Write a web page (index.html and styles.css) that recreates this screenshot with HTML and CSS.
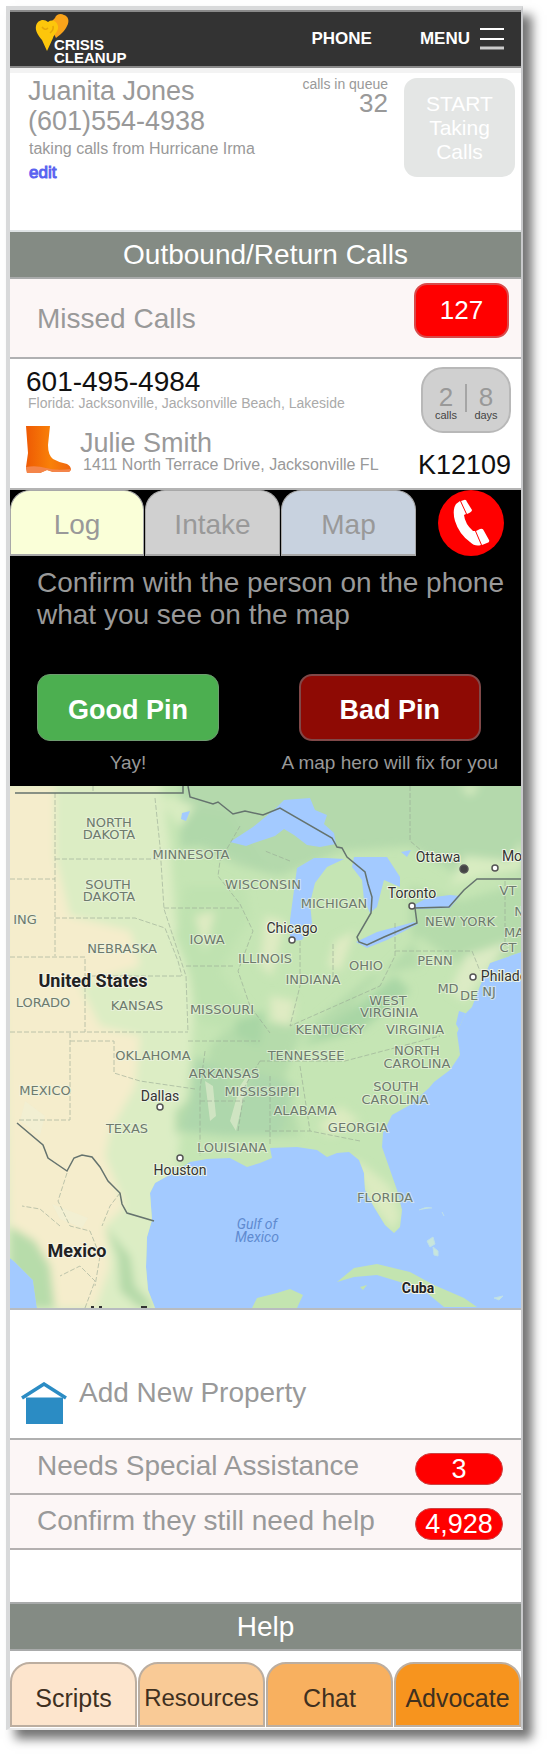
FILE: index.html
```html
<!DOCTYPE html>
<html lang="en">
<head>
<meta charset="utf-8">
<meta name="viewport" content="width=device-width, initial-scale=1">
<title>Crisis Cleanup Phone</title>
<link rel="stylesheet" href="styles.css">
</head>
<body>
<div class="panel">
  <header class="topbar">
    <a class="logo" href="#" aria-label="Crisis Cleanup">
      <svg width="96" height="54" viewBox="0 0 96 54">
        <path d="M20 6C21 2 26 1 29 3C33 4 35 9 32 14C30 19 25 23 21 26L14 12Z" fill="#f9a31a"/>
        <path d="M1 14C2 8 9 6 13 10C17 7 22 9 23 14C24 19 19 22 18 26L12 39L7 28C3 23 0 19 1 14Z" fill="#fdc60b"/>
        <path d="M7 15q3 4 6 1m2 5q4-3 3-7" fill="none" stroke="#e5a50a" stroke-width="1.5"/>
        <text class="logo-text" x="19" y="38">CRISIS</text>
        <text class="logo-text" x="19" y="51">CLEANUP</text>
      </svg>
    </a>
    <a class="phone-link" href="#">PHONE</a>
    <button class="menu" type="button">MENU
      <svg width="24" height="22" viewBox="0 0 24 22"><path d="M0 1h24M0 11h24" stroke="#fff" stroke-width="2"/><path d="M0 20h24" stroke="#ccc" stroke-width="3"/></svg>
    </button>
  </header>

  <section class="profile">
    <div class="agent">
      <div class="line">Juanita Jones</div>
      <div class="line">(601)554-4938</div>
      <div class="campaign">taking calls from Hurricane Irma</div>
      <a class="edit" href="#">edit</a>
    </div>
    <div class="queue">
      <div class="queue-label">calls in queue</div>
      <div class="queue-count">32</div>
    </div>
    <button class="start" type="button">START<br>Taking<br>Calls</button>
  </section>

  <h2 class="bar">Outbound/Return Calls</h2>

  <section class="missed">
    <span>Missed Calls</span>
    <span class="missed-count">127</span>
  </section>

  <section class="contact">
    <div class="contact-main">
      <div class="number">601-495-4984</div>
      <div class="region">Florida: Jacksonville, Jacksonville Beach, Lakeside</div>
      <div class="person">
        <svg width="46" height="48" viewBox="0 0 46 48">
          <defs><linearGradient id="boot"><stop offset="0" stop-color="#ee5a04"/><stop offset=".55" stop-color="#f98108"/><stop offset="1" stop-color="#ef6510"/></linearGradient></defs>
          <path d="M1 1H25L23 20Q23 30 28 34Q35 38 42 39Q46 41 46 45L44 47H28L22 45L15 48H2L1 42L3 28Z" fill="url(#boot)"/>
          <path d="M1 42Q11 40 21 43T46 44L44 47H28L22 45L15 48H2Z" fill="#f4854a"/>
        </svg>
        <div>
          <div class="person-name">Julie Smith</div>
          <div class="address">1411 North Terrace Drive, Jacksonville FL</div>
        </div>
      </div>
    </div>
    <div class="contact-side">
      <div class="stats">
        <div class="stat"><span>2</span><small>calls</small></div>
        <div class="stat-rule"></div>
        <div class="stat"><span>8</span><small>days</small></div>
      </div>
      <div class="case">K12109</div>
    </div>
  </section>

  <section class="work">
    <nav class="tabs">
      <button class="tab log" type="button">Log</button>
      <button class="tab intake" type="button">Intake</button>
      <button class="tab map-tab" type="button">Map</button>
      <button class="call" type="button" aria-label="Call">
        <svg width="66" height="66" viewBox="0 0 66 66">
          <circle cx="33" cy="33" r="33" fill="#f00"/>
          <path d="M18 14L22 11L28 24L26 25Q27 34 35 41L37 41L43 55Q37 57 32 52Q21 44 17 31Q14 20 18 14ZM23 11L26 10Q28 9 29 12L34 20Q34 22 29 24ZM38 41L42 39Q45 38 46 41L51 50Q52 52 49 53L44 55Z" fill="#fff"/>
        </svg>
      </button>
    </nav>
    <p class="prompt">Confirm with the person on the phone what you see on the map</p>
    <div class="pins">
      <div class="pin"><button class="pin-button good" type="button">Good Pin</button><span>Yay!</span></div>
      <div class="pin"><button class="pin-button bad" type="button">Bad Pin</button><span>A map hero will fix for you</span></div>
    </div>
  </section>

  <svg class="map" viewBox="0 0 511 522" role="img" aria-label="Map of the eastern United States">
    <defs>
      <clipPath id="land"><path d="M0 0H511V166L480 177L470 200L462 221L455 228L447 247L449 261L450 269L440 284L424 296L419 302L400 319L382 329L373 347L372 361L379 381L387 404L392 424L390 441L384 447L375 439L364 421L355 404L354 387L349 374L339 366L327 367L317 371L307 364L287 361L260 362L262 372L250 377L237 381L220 372L197 373L180 376L163 387L145 397L140 407L142 434L137 451L136 481L138 504L145 522H27L23 494L5 476L0 472Z"/></clipPath>
      <filter id="soft" x="-10%" y="-10%" width="120%" height="120%"><feGaussianBlur stdDeviation="4"/></filter>
    </defs>
    <path d="M0 0H511V522H0Z" fill="#a3caff"/>
    <g clip-path="url(#land)">
      <path d="M0 0H511V522H0Z" fill="#c5e5b4"/>
      <g filter="url(#soft)">
        <path d="M-10 -10H150L160 60L165 130L185 215L180 280L170 350L150 540H-10Z" fill="#dcedc4"/>
        <path d="M-10 0H45V70L60 130L120 145L130 180L70 200L90 240L130 250L125 300L100 345L95 370L115 420L95 440L100 480L85 522H30L20 490L0 460Z" fill="#f5edcc"/>
        <path d="M170 -10H520V90H450L400 60L330 65L270 90L230 80L170 50Z" fill="#b4d9ac"/>
        <path d="M400 100L450 115L520 95V170L450 180L410 150L350 210L330 240L290 250L275 290L290 350H240L245 300L215 340L180 335L165 350L165 325L195 300L200 260L225 235L300 240L360 190L410 180L400 140Z" fill="#b5dbab"/>
        <path d="M175 100H235L240 130L210 185L240 225L225 245L185 235L180 190L165 150Z" fill="#bfe2b0"/>
        <path d="M172 20L220 30L260 90L235 70L200 60L170 62Z" fill="#b0d8aa"/>
        <path d="M185 270L215 285L222 320L245 285L285 300L270 350L215 350L170 345L180 320Z" fill="#aed7ac"/>
        <path d="M0 440L25 455L40 480L45 522H20L0 480Z" fill="#b7dcaa"/>
        <path d="M95 440L120 470L125 500L145 522H130L110 505L108 470Z" fill="#b4d9a8"/>
        <path d="M455 170L500 155L480 180L455 215L440 205Z" fill="#dcebc4"/>
        <path d="M340 372L355 380L380 400L390 430L383 445L360 415ZM330 320L350 335L320 350L308 340Z" fill="#dcebc0"/>
        <path d="M260 210L285 215L280 240L262 235ZM185 130L205 125L195 165ZM325 155L345 145L330 185L318 180ZM255 130L275 135L262 190L250 180Z" fill="#dfebc3"/>
        <path d="M225 235L255 225L250 260L225 250ZM340 225L385 190L400 205L350 245L290 260Z" fill="#a9d6a5"/>
        <path d="M160 10L185 20L170 42L150 15ZM455 70L500 75L512 55V85L470 90L440 100ZM450 0H470L460 10Z" fill="#d8ecc1"/>
      </g>
      <path d="M10 335L30 350L35 330L15 315ZM42 418L60 425L78 432L72 442L50 433ZM195 295L203 300L206 330L200 335ZM230 300L240 285L226 345L220 335Z" fill="#f0f2d8" opacity=".5"/>
      <path d="M220 56L243 41L265 23L274 14L300 12L305 24L317 29L314 38L324 47L326 58L310 61L297 59L284 49L274 43L265 50L247 56L236 60ZM172 27L180 25L176 35L171 33Z" fill="#a3caff"/>
      <path d="M317 72L304 72L287 82L284 104L280 134L280 155L292 154L302 137L300 117L305 97L317 81L334 73ZM344 71L377 71L390 91L390 101L374 94L367 121L360 127L354 114L352 94L342 81ZM346 156L367 146L404 136L408 138L377 154L357 162ZM404 119L417 112L440 109L450 110L440 122L407 123ZM391 66L401 64L397 71Z" fill="#a3caff"/>
      <path d="M449 225L458 228L450 245L446 238Z" fill="#a3caff"/>
      <g fill="none" stroke="#98a894" stroke-width="1" opacity=".6" stroke-dasharray="5 2">
        <path d="M45 7V170M45 73H150M0 93H45M45 132H125L155 142L168 175L172 190M0 171H75V246M75 190H172M0 246H178M60 247V334H7M60 255H104V287L130 295L185 303M145 12L150 60L154 123L176 190L178 246M154 122H230M176 180H225M230 40L210 75L208 90L230 118L243 145L228 185L240 220L260 247M178 255H250M195 265L190 303V370M190 315H235M228 345L235 300L250 275M250 275H335L430 250M260 290V360M290 280L300 345M255 345H300L350 355M290 155V200L280 240L370 200M323 158V200M385 137V170L370 200M385 165H462L470 185M83 0V7M400 0V55L412 65M495 95V160M280 75L255 65"/>
        <path d="M57 387L48 415L60 440L80 445L90 470L85 500M50 440L30 423L12 420M110 407L100 420L92 440M75 522L85 495L70 480L50 490"/>
      </g>
    </g>
    <path d="M327 496L344 482L367 478L400 486L424 499L454 512L467 521H434L417 507L390 496L367 489L344 491ZM242 522L247 512L267 507L280 503L293 509L287 522ZM350 501L357 499L353 504Z" fill="#c3e4b0"/>
    <path d="M417 455L423 451L425 458L420 461ZM423 461L428 465L428 470L424 469ZM484 512L493 510L489 514ZM409 424Q416 420 422 422M432 426L434 430" fill="#c8e6dc" stroke="#bfe0e8"/>
    <g fill="none" stroke="#65736e" stroke-width="1.5">
      <path d="M5 7H173V0M178 0L180 11L203 18L208 16L223 28L235 25L253 29L270 22L322 52L327 61L332 62L337 71L355 86L358 98L362 111L361 127L347 151L349 156L357 159L374 151L407 137L405 122L439 121L454 104L467 93H511"/>
      <path d="M7 337L33 359L38 372L57 385L64 372L72 369L82 371L90 381L98 395L110 407L112 418L117 427L144 435"/>
    </g>
    <g class="state">
      <text x="99" y="41">NORTH</text><text x="99" y="53">DAKOTA</text><text x="181" y="73">MINNESOTA</text>
      <text x="98" y="103">SOUTH</text><text x="99" y="115">DAKOTA</text><text x="15" y="138">ING</text>
      <text x="112" y="167">NEBRASKA</text><text x="197" y="158">IOWA</text><text x="253" y="103">WISCONSIN</text>
      <text x="324" y="122">MICHIGAN</text><text x="255" y="177">ILLINOIS</text><text x="33" y="221">LORADO</text>
      <text x="127" y="224">KANSAS</text><text x="212" y="228">MISSOURI</text><text x="498" y="109">VT</text>
      <text x="509" y="130">N</text><text x="504" y="151">MA</text><text x="498" y="166">CT</text>
      <text x="450" y="140">NEW YORK</text><text x="425" y="179">PENN</text><text x="356" y="184">OHIO</text>
      <text x="303" y="198">INDIANA</text><text x="438" y="207">MD</text><text x="459" y="214">DE</text><text x="479" y="210">NJ</text>
      <text x="378" y="219">WEST</text><text x="379" y="231">VIRGINIA</text><text x="320" y="248">KENTUCKY</text>
      <text x="405" y="248">VIRGINIA</text><text x="407" y="269">NORTH</text><text x="407" y="282">CAROLINA</text>
      <text x="386" y="305">SOUTH</text><text x="385" y="318">CAROLINA</text><text x="296" y="274">TENNESSEE</text>
      <text x="252" y="310">MISSISSIPPI</text><text x="295" y="329">ALABAMA</text><text x="348" y="346">GEORGIA</text>
      <text x="375" y="416">FLORIDA</text><text x="143" y="274">OKLAHOMA</text><text x="214" y="292">ARKANSAS</text>
      <text x="35" y="309">MEXICO</text><text x="117" y="347">TEXAS</text><text x="222" y="366">LOUISIANA</text>
    </g>
    <g class="city">
      <text x="282" y="147">Chicago</text><text x="428" y="76">Ottawa</text><text x="502" y="75">Mo</text>
      <text x="402" y="112">Toronto</text><text x="494" y="195">Philade</text><text x="150" y="315">Dallas</text><text x="170" y="389">Houston</text>
    </g>
    <g fill="#fff" stroke="#555" stroke-width="1.5">
      <circle cx="282" cy="154" r="3"/><circle cx="485" cy="82" r="3"/><circle cx="402" cy="120" r="3"/><circle cx="463" cy="191" r="3"/>
      <circle cx="150" cy="321" r="3"/><circle cx="170" cy="372" r="3"/><circle cx="454" cy="83" r="4" fill="#444"/>
    </g>
    <g class="country">
      <text x="83" y="201">United States</text><text x="67" y="471">Mexico</text><text class="small" x="408" y="507">Cuba</text>
    </g>
    <g class="sea"><text x="247" y="443">Gulf of</text><text x="247" y="456">Mexico</text></g>
    <path d="M81 521h3m5 0h3m39 0h6" stroke="#333" stroke-width="2"/>
  </svg>

  <section class="property">
    <svg width="46" height="43" viewBox="0 0 46 43">
      <path d="M5 15H42V42H5Z" fill="#2b8cc4"/>
      <path d="M1 16L23 2L45 16" fill="#fff" stroke="#2b8cc4" stroke-width="3.500"/>
      <path d="M5 15.500H42V20H5Z" fill="#2b8cc4"/>
    </svg>
    <a class="add" href="#">Add New Property</a>
  </section>

  <section class="row"><span>Needs Special Assistance</span><span class="count">3</span></section>
  <section class="row"><span>Confirm they still need help</span><span class="count">4,928</span></section>

  <h2 class="bar help">Help</h2>
  <nav class="help-tabs">
    <button class="help-tab scripts" type="button">Scripts</button>
    <button class="help-tab resources" type="button">Resources</button>
    <button class="help-tab chat" type="button">Chat</button>
    <button class="help-tab advocate" type="button">Advocate</button>
  </nav>
</div>
</body>
</html>
```
FILE: styles.css
```css
* { box-sizing: border-box; }

body {
  margin: 0;
  padding: 6px 31px 30px 6px;
  background: #fff;
  color: #999;
  font: 27px/30px "Liberation Sans", Arial, sans-serif;
}

button {
  margin: 0;
  padding: 0;
  border: 0;
  background: none;
  color: inherit;
  font: inherit;
  cursor: pointer;
}

a { color: inherit; text-decoration: none; }
svg { display: block; flex: none; }

.panel {
  border: 4px solid #d8d9da;
  border-right: 2px solid #c8c9cb;
  border-bottom: 2px solid #e8e8e8;
  background: #fff;
  box-shadow: 9px 9px 10px rgba(0, 0, 0, .55);
}

/* Top bar */
.topbar {
  display: flex;
  align-items: center;
  height: 58px;
  padding: 0 17px 0 25px;
  border-top: 2px solid #8a8a8a;
  border-bottom: 2px solid #8a8a8a;
  background: #333;
  color: #fff;
  font-size: 17px;
  font-weight: bold;
}
.logo { margin-right: auto; }
.logo-text { fill: #fff; font-size: 15px; font-weight: bold; }
.phone-link { margin-right: 48px; }
.menu { display: flex; align-items: center; gap: 10px; }

/* Agent profile */
.profile {
  display: flex;
  align-items: flex-start;
  height: 162px;
  padding: 3px 6px 0 18px;
  border-top: 5px solid #f3f3f3;
}
.agent { flex: 1; }
.campaign { padding-left: 1px; font-size: 16px; line-height: 25px; }
.edit { display: block; padding-left: 1px; color: #5a62f0; font-size: 17px; line-height: 24px; -webkit-text-stroke: 1px #5a62f0; }
.queue { margin-right: 16px; text-align: right; }
.queue-label { font-size: 14px; line-height: 16px; }
.queue-count { font-size: 26px; line-height: 22px; }
.start {
  width: 111px;
  height: 99px;
  margin-top: 2px;
  border-radius: 13px;
  background: #e4e6e5;
  color: #fff;
  font-size: 21px;
  line-height: 24px;
}

.bar {
  margin: 0;
  padding: 8px 0 7px;
  border-top: 2px solid #dfe3e5;
  border-bottom: 2px solid #a9abab;
  background: #848b84;
  color: #fff;
  font-size: 28px;
  font-weight: normal;
  line-height: 30px;
  text-align: center;
}

/* Missed calls */
.missed {
  display: flex;
  justify-content: space-between;
  align-items: flex-start;
  padding: 4px 12px 19px 27px;
  border-bottom: 2px solid #b0b0b2;
  background: #fcf6f6;
  font-size: 28px;
}
.missed > :first-child { padding-top: 21px; }
.missed-count {
  width: 95px;
  border: 2px solid #d84a4a;
  border-radius: 13px;
  background: #f00;
  color: #fff;
  font-size: 26px;
  line-height: 51px;
  text-align: center;
}

/* Contact */
.contact {
  display: flex;
  justify-content: space-between;
  padding: 8px 10px 8px 15px;
  border-bottom: 2px solid #b4b4b4;
}
.number { padding-left: 1px; color: #111; font-size: 28px; }
.region { padding-left: 3px; font-size: 14px; line-height: 12px; color: #aaa; white-space: nowrap; }
.person { display: flex; gap: 9px; margin-top: 16px; }
.person-name { padding-top: 3px; }
.address { padding-left: 3px; font-size: 16px; line-height: 14px; white-space: nowrap; }
.contact-side { display: flex; flex-direction: column; align-items: flex-end; gap: 17px; }
.stats {
  display: flex;
  justify-content: center;
  gap: 4px;
  width: 90px;
  height: 66px;
  padding-top: 15px;
  border: 2px solid #b8b8b8;
  border-radius: 22px;
  background: #d0d0d0;
}
.stat { display: flex; flex-direction: column; align-items: center; width: 30px; font-size: 26px; line-height: 26px; }
.stat small { font-size: 11px; line-height: 10px; color: #444; }
.stat-rule { width: 2px; height: 28px; background: #a5a5a5; }
.case { color: #111; }

/* Work area */
.work { padding-bottom: 12px; background: #000; }
.tabs { display: grid; grid-template-columns: 135fr 136fr 136fr 104fr; }
.tab {
  height: 66px;
  margin-right: 1px;
  padding-top: 4px;
  border: 1px solid #a8a8a8;
  border-bottom-width: 2px;
  border-radius: 20px 20px 0 0;
  font-size: 28px;
}
.log { background: #faffd8; }
.intake { background: #d0d0d0; }
.map-tab { background: #c8d2df; }
.call { justify-self: center; margin-left: 3px; }
.prompt { margin: 11px 12px 43px 27px; font-size: 28px; line-height: 32px; }
.pins { display: flex; justify-content: space-between; padding: 0 23px 0 27px; }
.pin { display: flex; flex-direction: column; align-items: center; gap: 11px; font-size: 19px; line-height: 22px; white-space: nowrap; }
.pin-button {
  width: 182px;
  height: 67px;
  padding-top: 4px;
  border-radius: 13px;
  color: #fff;
  font-size: 27px;
  font-weight: bold;
}
.good { border: 1px solid #6f9c70; background: #4caf50; }
.bad { border: 2px solid #804848; background: #8e0a04; }

/* Map */
.map { width: 100%; height: auto; border-bottom: 2px solid #b8bcc0; font-family: Roboto, sans-serif; text-anchor: middle; }
.state { font-family: "DejaVu Sans", sans-serif; font-size: 13px; fill: #6d7a6d; stroke: #eef5e4; stroke-width: 2px; paint-order: stroke; stroke-opacity: .6; }
.city { font-size: 14px; fill: #333; stroke: #eef5e4; stroke-width: 2px; paint-order: stroke; }
.country { font-size: 18px; font-weight: bold; fill: #222; stroke: #f5f5e8; stroke-width: 2px; paint-order: stroke; }
.small { font-size: 14px; }
.sea { font-size: 14px; font-style: italic; fill: #5f8bd0; }

/* Property and queue rows */
.property { display: flex; gap: 12px; padding: 68px 12px 13px 11px; border-bottom: 2px solid #b0b0b0; font-size: 28px; }
.property svg { margin-top: 4px; }
.row {
  display: flex;
  justify-content: space-between;
  align-items: flex-start;
  padding: 11px 18px 10px 27px;
  border-bottom: 2px solid #b4b0b0;
  background: #fcf6f6;
  font-size: 28px;
}
.count {
  width: 88px;
  height: 32px;
  margin-top: 2px;
  margin-bottom: -2px;
  border: 1px solid #c44;
  border-radius: 16px;
  background: #f00;
  color: #fff;
  font-size: 27px;
  text-align: center;
}

/* Help */
.help { margin-top: 52px; border-top-color: #a9abab; }
.help-tabs { display: grid; grid-template-columns: repeat(4, 1fr); gap: 1px; padding: 11px 0 1px; }
.help-tab {
  height: 65px;
  padding-top: 6px;
  border: 2px solid #bcaea0;
  border-radius: 20px 20px 0 0;
  color: #40301f;
  font-size: 25px;
}
.scripts { background: #fde5cd; }
.resources { background: #f9ca96; font-size: 24px; }
.chat { background: #f8b05f; }
.advocate { background: #f7941e; }
```
